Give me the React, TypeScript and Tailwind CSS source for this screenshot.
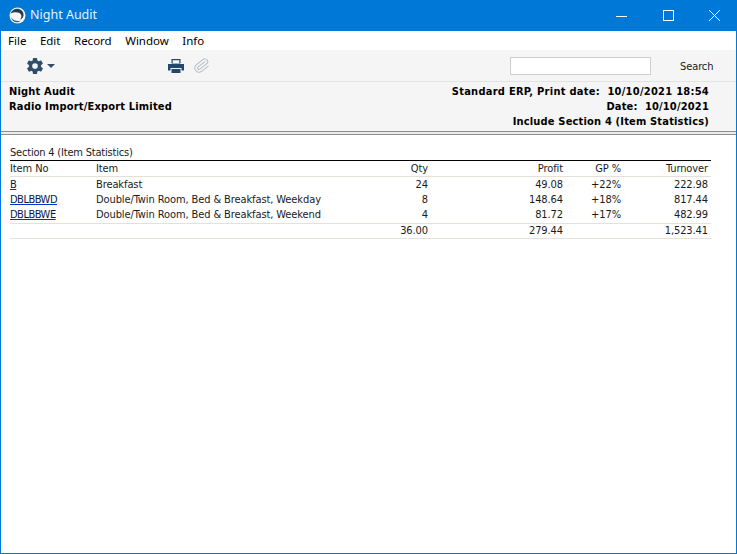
import { Paperclip } from "lucide-react";
import { IoSettingsSharp } from "react-icons/io5";

const menuItems = ["File", "Edit", "Record", "Window", "Info"];

const rows = [
  { no: "B", item: "Breakfast", qty: "24", profit: "49.08", gp: "+22%", turnover: "222.98" },
  { no: "DBLBBWD", item: "Double/Twin Room, Bed & Breakfast, Weekday", qty: "8", profit: "148.64", gp: "+18%", turnover: "817.44" },
  { no: "DBLBBWE", item: "Double/Twin Room, Bed & Breakfast, Weekend", qty: "4", profit: "81.72", gp: "+17%", turnover: "482.99" },
];

const cols = "grid grid-cols-[86px_1fr_60px_135px_58px_90px]";

export default function App() {
  return (
    <div className="flex h-[554px] w-[737px] flex-col overflow-hidden border border-t-0 border-[#0078d7] bg-white font-['DejaVu_Sans_Condensed','DejaVu_Sans',sans-serif] text-[11px] text-[#1a1a1a]">
      {/* Title bar */}
      <div className="-mx-px flex h-[31px] shrink-0 items-center bg-[#0078d7] pl-[9px] text-white">
        <svg width="17" height="17" viewBox="0 0 17 17" className="mr-[4px]">
          <circle cx="8.5" cy="8.5" r="8" fill="#f4f6f8" />
          <path d="M1.5 6.5C3 2.5 7 1 10 2c3 1 5 3.500 4.500 6.500-.3 2-1.500 3.500-3.500 4 1.500-1.500 1.800-3.500 1-5C10.500 5 5.500 4.500 1.500 6.500z" fill="#2a3a4c" />
          <path d="M2 10c2 3.500 6 5 10 3.500-3 3-8.500 2.500-10-3.500z" fill="#44566a" />
        </svg>
        <span className="font-['Noto_Sans',sans-serif] text-[12.5px] text-[#e6f2fb]">Night Audit</span>
        <div className="ml-auto flex items-center">
          <div className="flex w-[46px] justify-center">
            <svg width="12" height="12" viewBox="0 0 12 12"><path d="M0 6.500h11" stroke="#fff" strokeWidth="1" /></svg>
          </div>
          <div className="flex w-[46px] justify-center">
            <div className="h-[11px] w-[11px] border border-white" />
          </div>
          <div className="flex w-[46px] justify-center">
            <svg width="13" height="13" viewBox="0 0 13 13"><path d="M1 1l11 11M12 1L1 12" stroke="#fff" strokeWidth="1" /></svg>
          </div>
        </div>
      </div>

      {/* Menu bar */}
      <div className="flex h-[19px] shrink-0 items-center gap-[13.500px] pl-[7px] font-['Noto_Sans',sans-serif] text-[11.500px] text-black">
        {menuItems.map((m) => (
          <span key={m}>{m}</span>
        ))}
      </div>

      {/* Toolbar */}
      <div className="flex h-[32px] shrink-0 items-center border-b border-[#e3e3e3] bg-[#f5f5f5] pl-[25px]">
        <IoSettingsSharp size={18} className="mt-[1px] text-[#2f4d6d]" />
        <div className="ml-[3px] h-0 w-0 border-x-[4px] border-t-[4px] border-x-transparent border-t-[#2f4d6d]" />
        <svg width="16" height="14" viewBox="0 0 16 14" className="ml-[113px]">
          <path d="M3.500 0h9v4.500h-9z M0 5h16v6.500h-2.500V9h-11v2.500H0z M3.500 10h9v4h-9z" fill="#24476d" />
          <path d="M4.700 1.200h6.600v3h-6.600z" fill="#f5f5f5" />
        </svg>
        <Paperclip size={17} strokeWidth={1.4} className="ml-[9px] rotate-[8deg] text-[#b4bcc5]" />
        <div className="ml-[300px] h-[18px] w-[141px] border border-[#cfcfcf] bg-white" />
        <span className="ml-[29px] mt-[3px] text-[11px] tracking-[-0.1px]">Search</span>
      </div>

      {/* Report header */}
      <div className="flex h-[49px] shrink-0 justify-between bg-[#f5f5f5] pl-[8px] pr-[27px] pt-[2px] text-[11px] font-bold leading-[15px] tracking-[0.18px] text-black">
        <div>
          <div>Night Audit</div>
          <div>Radio Import/Export Limited</div>
        </div>
        <div className="text-right">
          <div className="tracking-[0.27px]">Standard ERP, Print date:&nbsp; 10/10/2021 18:54</div>
          <div>Date:&nbsp; 10/10/2021</div>
          <div>Include Section 4 (Item Statistics)</div>
        </div>
      </div>
      <div className="h-[4px] shrink-0 border-y border-[#8f8f8f] bg-[#ececec]" />

      {/* Report body */}
      <div className="ml-[9px] mr-[25px] mt-[10px] leading-[16px] tracking-[-0.1px]">
        <div className="h-[15px] tracking-[-0.2px]">Section 4 (Item Statistics)</div>
        <div className={`${cols} h-[17px] border-t border-b border-t-black border-b-[#e6e0da]`}>
          <span>Item No</span>
          <span>Item</span>
          <span className="text-right">Qty</span>
          <span className="text-right">Profit</span>
          <span className="text-right">GP %</span>
          <span className="pr-[3px] text-right">Turnover</span>
        </div>
        {rows.map((r) => (
          <div key={r.no} className={`${cols} h-[15px]`}>
            <span className="tracking-[-0.5px] text-[#0a1a4b] underline decoration-[#0033cc]">{r.no}</span>
            <span>{r.item}</span>
            <span className="text-right">{r.qty}</span>
            <span className="text-right">{r.profit}</span>
            <span className="text-right">{r.gp}</span>
            <span className="pr-[3px] text-right">{r.turnover}</span>
          </div>
        ))}
        <div className={`${cols} mt-[1px] h-[16px] border-y border-[#e6e0da] leading-[14px]`}>
          <span />
          <span />
          <span className="text-right">36.00</span>
          <span className="text-right">279.44</span>
          <span />
          <span className="pr-[3px] text-right">1,523.41</span>
        </div>
      </div>
    </div>
  );
}
